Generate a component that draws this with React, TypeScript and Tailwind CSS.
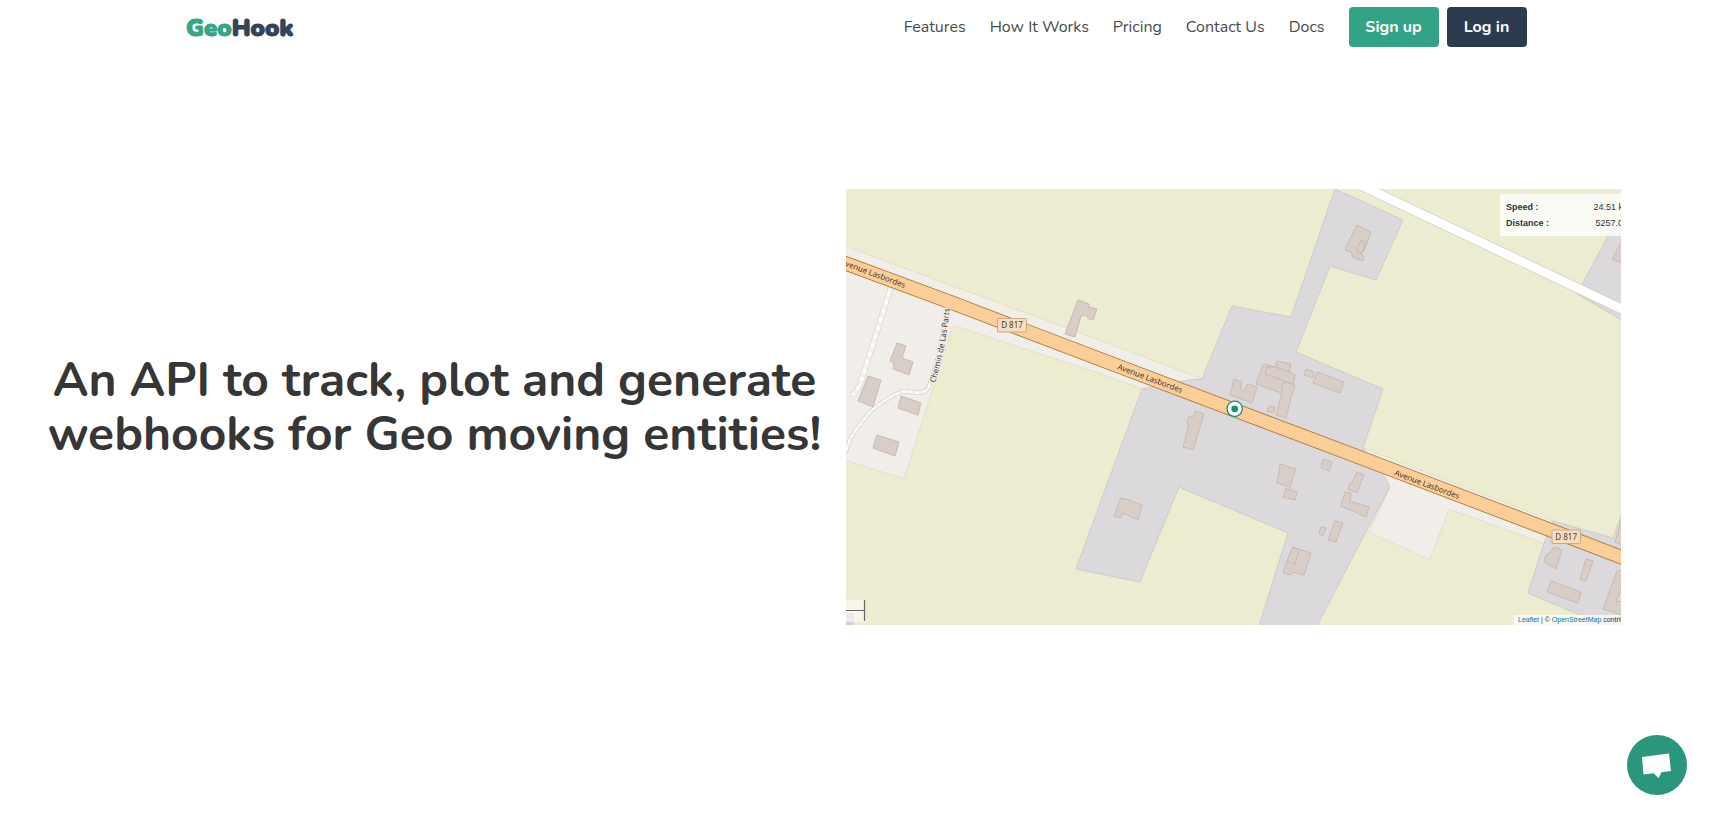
const navLinks = ["Features", "How It Works", "Pricing", "Contact Us", "Docs"];

const buildings = [
  "51,154 60,157 56,169 67,173 63,186 47,180 48,174 44,172",
  "22,187 35,191 27,218 12,212",
  "55,207 75,214 72,226 52,219",
  "31,246 53,253 49,267 27,259",
  "232,111 243,115 242,118 251,120 247,131 243,130 239,126 235,127 229,148 219,145",
  "511,36 525,43 518,62 514,64 518,67 517,72 506,68 506,64 499,61 505,48",
  "515,51 520,53 516,64 510,62",
  "388,190 396,193 394,199 398,202 402,195 411,198 406,214 384,206",
  "417,175 429,178 431,172 445,175 443,183 449,186 447,195 435,204 410,195",
  "421,178 429,178 443,183 449,186 447,195 419,185",
  "437,193 449,196 445,209 440,229 430,226 435,208",
  "460,180 468,183 466,189 458,186",
  "471,183 498,193 494,204 467,194",
  "423,217 429,218 427,224 421,222",
  "349,222 358,225 347,261 337,258 343,236 341,235 343,227 347,228",
  "275,309 283,311 296,316 292,331 277,324 274,329 268,327",
  "434,275 450,280 444,298 431,294 433,283",
  "440,299 451,303 449,311 437,308",
  "477,270 486,273 483,282 475,279",
  "511,283 518,286 511,304 502,300 504,294 506,293",
  "499,303 505,304 504,312 523,318 520,328 495,317",
  "489,332 497,334 490,353 482,351",
  "475,338 480,339 477,347 473,345",
  "447,358 465,364 458,386 446,383 445,386 437,384 442,369",
  "447,358 453,361 449,375 441,372",
  "708,358 716,361 710,380 698,373 700,366 704,364",
  "740,370 747,372 740,392 734,390",
  "705,392 735,403 732,414 701,403",
  "776,381 771,382 757,420 776,426 776,413 770,412 776,400",
  "776,52 766,70 776,74",
  "776,328 769,353 776,356",
];

function RouteMap() {
  return (
    <svg viewBox="0 0 775 436" className="block w-full" role="img" aria-label="Map of Avenue Lasbordes">
      <rect width="775" height="436" fill="#ebecd0" />

      {/* residential strips beside the avenue */}
      <g fill="#f1ede8" stroke="#dcd8cc" strokeWidth="0.7">
        <path d="M-1 57 L264 155 L356 190 L296 200 L264 188 L107 136 L58 290 L-1 271Z" />
        <path d="M517 259 L707 332 L707 356 L697 354 L603 320 L584 371 L523 343 L544 298 L530 280Z" />
      </g>

      <g fill="#dbd9dc" stroke="#c8c5c4" strokeWidth="0.8">
        <path d="M489 0 L557 31 L530 91 L484 77 L450 163 L537 200 L517 259 L539 288 L544 298 L514 354 L471 437 L413 437 L442 344 L333 298 L294 393 L230 380 L296 200 L342 191 L356 190 L386 117 L445 128Z" />
        <path d="M776 20 L762 47 L731 105 L776 131Z" />
        <path d="M707 332 L767 349 L776 324 L776 437 L760 437 L682 404 L699 351Z" />
      </g>

      <g fill="#d9cdc8" stroke="#c6b5ad" strokeWidth="0.9">
        {buildings.map((points) => (
          <polygon key={points} points={points} />
        ))}
      </g>

      {/* side roads */}
      <g fill="none" strokeLinejoin="round">
        <path d="M45 98 L14 196 L7 206" stroke="#cdc8c4" strokeWidth="5.5" />
        <path d="M45 98 L14 196 L7 206" stroke="#fff" strokeWidth="4.3" />
        <path d="M45 98 L14 196 L7 206" stroke="#f3f1ef" strokeWidth="3.5" strokeDasharray="5 4" />
        <path d="M-1 265 L4 250 Q10 239 26 221 Q42 208 57 202 L74 204 Q81 203 83 197 L91 174 L102 119" stroke="#c6c1bd" strokeWidth="4" />
        <path d="M-1 265 L4 250 Q10 239 26 221 Q42 208 57 202 L74 204 Q81 203 83 197 L91 174 L102 119" stroke="#fff" strokeWidth="2.8" />
        <path d="M-1 265 L4 250 Q10 239 26 221 Q42 208 57 202 L74 204 Q81 203 83 197 L91 174 L102 119" stroke="#f3f1ef" strokeWidth="2" strokeDasharray="4 3" />
        <path d="M512 -5 L777 120.5" stroke="#c9c8bf" strokeWidth="10" />
        <path d="M512 -5 L777 120.5" stroke="#fff" strokeWidth="8.8" />
      </g>

      {/* Avenue Lasbordes */}
      <path d="M-4 73 L104 113 L264 174 L514 268.5 L779 369.5" fill="none" stroke="#ab7b3c" strokeWidth="14.5" />
      <path d="M-4 73 L104 113 L264 174 L514 268.5 L779 369.5" fill="none" stroke="#fbce98" strokeWidth="12.7" />

      <defs>
        <path id="chemin" d="M89 194 Q99 163 104 118" />
      </defs>
      <g fontFamily="'Open Sans', sans-serif" fontSize="8" fill="#33291c">
        <text transform="translate(-6 75) rotate(20.5)">Avenue Lasbordes</text>
        <text transform="translate(271 180) rotate(20.5)">Avenue Lasbordes</text>
        <text transform="translate(548 286) rotate(20.5)">Avenue Lasbordes</text>
        <text stroke="#f1ede8" strokeWidth="2" paintOrder="stroke">
          <textPath href="#chemin">Chemin de Las Parts</textPath>
        </text>
      </g>

      <g fontFamily="'Noto Sans', sans-serif" fontSize="8" fill="#4d4236" textAnchor="middle">
        <rect x="151.5" y="129.5" width="29" height="13.5" rx="1" fill="#f8dcc0" stroke="#cba987" />
        <text x="166" y="139.2">D 817</text>
        <rect x="706" y="341" width="28.5" height="13.5" rx="1" fill="#f8dcc0" stroke="#cba987" />
        <text x="720.2" y="350.7">D 817</text>
      </g>

      {/* tracked entity */}
      <circle cx="388.7" cy="219.8" r="7.7" fill="#fff" stroke="#1d8f74" strokeWidth="1.3" />
      <circle cx="388.7" cy="219.8" r="3.4" fill="#1d8f74" />

      {/* scale */}
      <path d="M0 424 H8 V436 H0Z" fill="#d9cdd0" />
      <rect y="411" width="19" height="22" fill="#fff" fillOpacity="0.55" />
      <path d="M0 421.5 H18.5 M18.5 411 V432" fill="none" stroke="#666" strokeWidth="1.2" />
    </svg>
  );
}

function Logo() {
  return (
    <svg viewBox="0 0 128 40" className="h-10 w-32" role="img" aria-label="GeoHook">
      <text
        x="1"
        y="29"
        fontFamily="Nunito, sans-serif"
        fontSize="24"
        fontWeight="900"
        strokeWidth="1"
        strokeLinejoin="round"
      >
        <tspan fill="#35a585" stroke="#35a585">Geo</tspan>
        <tspan fill="#34435a" stroke="#34435a">Hook</tspan>
      </text>
    </svg>
  );
}

export default function App() {
  return (
    <div className="flex min-h-screen flex-col bg-white font-['Nunito','Open_Sans',sans-serif] text-[#4a4a4a]">
      <header className="mx-auto flex h-[54px] w-full max-w-[1342px] items-center justify-between">
        <a href="#home">
          <Logo />
        </a>
        <nav className="flex items-center">
          <div className="mr-6 flex gap-6 text-base">
            {navLinks.map((label) => (
              <a key={label} href="#" className="whitespace-nowrap">
                {label}
              </a>
            ))}
          </div>
          <div className="flex gap-2 text-base font-bold text-white">
            <button className="h-10 w-[90px] rounded bg-[#33a385]">Sign up</button>
            <button className="h-10 w-20 rounded bg-[#2d3b4f]">Log in</button>
          </div>
        </nav>
      </header>

      <main className="grid flex-1 grid-cols-2 items-center gap-6 pr-[90px] pb-[54px] pl-[47px]">
        <h1 className="text-center text-5xl leading-[54px] font-bold text-[#363636]">
          An API to track, plot and generate webhooks for Geo moving entities!
        </h1>

        <div className="relative overflow-hidden font-['Liberation_Sans',sans-serif]">
          <RouteMap />
          <dl className="absolute top-[5px] -right-[23px] grid h-[42px] w-36 grid-cols-2 content-center bg-white/80 px-1.5 text-[9px] leading-4 text-[#333]">
            <dt className="font-bold">Speed :</dt>
            <dd className="text-right">24.51 km/h</dd>
            <dt className="font-bold">Distance :</dt>
            <dd className="text-right">5257.00 m</dd>
          </dl>
          <p className="absolute right-0 bottom-0 w-[107px] overflow-hidden bg-white/70 pl-1 text-[7px] leading-[10px] whitespace-nowrap text-[#333]">
            <a href="#leaflet" className="text-[#0078a8]">Leaflet</a> | ©{" "}
            <a href="#osm" className="text-[#0078a8]">OpenStreetMap</a> contributors
          </p>
        </div>
      </main>

      <button
        aria-label="Open chat"
        className="fixed right-6 bottom-[19px] flex size-[60px] items-center justify-center rounded-full bg-[#2a967c]"
      >
        <svg viewBox="0 0 60 60" className="size-full" fill="#fff">
          <path d="M15 22 L42 18.5 L44 36 L34.5 37.3 L31.5 43 L26.5 38.2 L16.5 39.5Z" />
        </svg>
      </button>
    </div>
  );
}
